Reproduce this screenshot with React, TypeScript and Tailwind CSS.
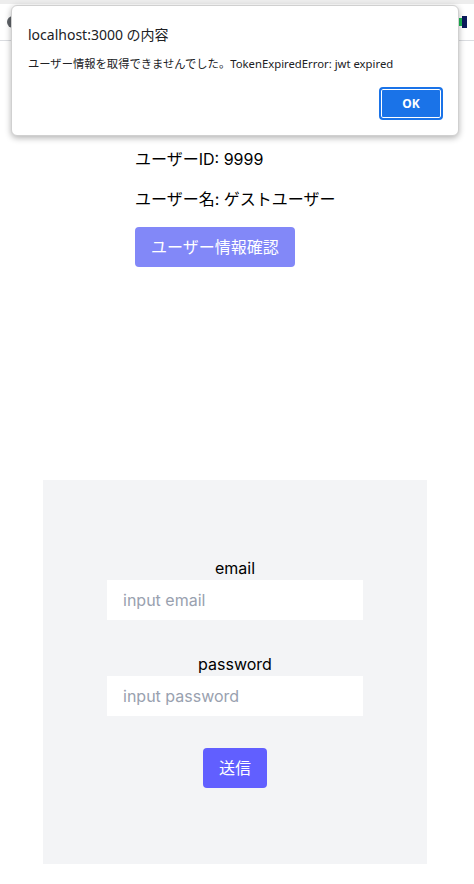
import React from 'react'

export default function App() {
  return (
    <div className="relative w-[474px] h-[884px] overflow-hidden bg-white font-['Inter','Noto_Sans_CJK_JP',sans-serif] text-black">
      {/* browser toolbar peeking out behind the alert */}
      <div className="h-[41px] border-t-[4px] border-t-[#ededed] border-b border-b-[#dadce0] bg-white flex items-center justify-between px-[7px]">
        <div className="w-[7px] h-[12px] rounded-l-full bg-[#5f6368]" />
        <div className="flex items-center">
          <div className="w-[4px] h-[8px] bg-[#1db954]" />
          <div className="w-[5px] h-[12px] bg-[#0b1a5c]" />
        </div>
      </div>

      <main className="flex flex-col items-start pl-[135px] pt-[106px]">
        <p className="text-base leading-6">ユーザーID: 9999</p>
        <p className="text-base leading-6 mt-4">ユーザー名: ゲストユーザー</p>
        <button className="mt-4 h-10 px-4 rounded bg-[#8288f8] text-white text-base">
          ユーザー情報確認
        </button>
      </main>

      <div className="ml-[43px] mt-[213px] w-96 h-96 bg-gray-100 flex flex-col items-center justify-center">
        <label className="text-base leading-6">email</label>
        <input
          className="w-64 h-10 bg-white px-4 text-base outline-none placeholder:text-gray-400"
          placeholder="input email"
        />
        <label className="mt-8 text-base leading-6">password</label>
        <input
          type="password"
          className="w-64 h-10 bg-white px-4 text-base outline-none placeholder:text-gray-400"
          placeholder="input password"
        />
        <button className="mt-8 w-16 h-10 rounded bg-indigo-500 text-white text-base">送信</button>
      </div>

      {/* alert dialog */}
      <div className="absolute left-[11px] top-[5px] w-[448px] h-[131px] bg-white rounded-[6px] border border-[#d0d0d0] shadow-[0_2px_6px_rgba(0,0,0,0.3)] font-['Noto_Sans','Noto_Sans_CJK_JP',sans-serif] text-[#202124]">
        <p className="absolute left-[16px] top-[19px] text-[14px] leading-5">localhost:3000 の内容</p>
        <p className="absolute left-[16px] top-[48px] text-[11.3px] leading-5">
          ユーザー情報を取得できませんでした。TokenExpiredError: jwt expired
        </p>
        <button className="absolute left-[367px] top-[81px] w-[64px] h-[33px] rounded-[4px] bg-[#1a73e8] border-2 border-[#1a73e8] ring-1 ring-inset ring-white text-white text-[12px] font-bold">
          OK
        </button>
      </div>
    </div>
  )
}
